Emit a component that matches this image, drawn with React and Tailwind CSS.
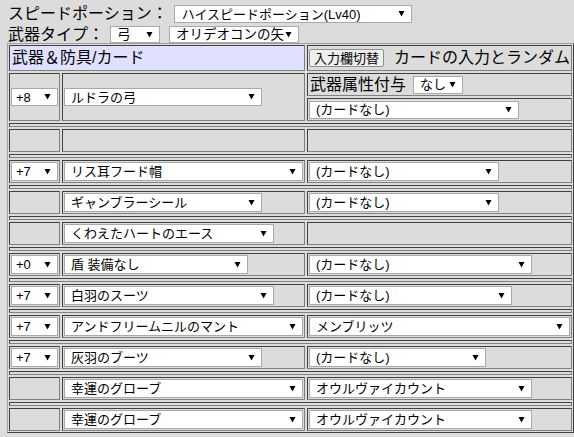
import React from "react";

const cellCls =
  "border border-t-[#404040] border-l-[#404040] border-r-[#808080] border-b-[#808080] p-[1px] flex items-center";

function Arrow() {
  return (
    <svg className="ml-auto mr-[6px] shrink-0" width="7" height="6" viewBox="0 0 7 6">
      <polygon points="0.5,0 6.5,0 3.5,5.5" fill="#000" />
    </svg>
  );
}

function Sel({ text, className = "", pl = "pl-[6px]", size = "text-[13px]" }) {
  return (
    <div
      className={`flex items-center bg-white border border-[#a9a9a9] leading-none text-black whitespace-nowrap ${size} ${pl} ${className}`}
    >
      <span>{text}</span>
      <Arrow />
    </div>
  );
}

function Cell({ children, className = "" }) {
  return <div className={`${cellCls} ${className}`}>{children}</div>;
}

function Sep() {
  return <div className="col-span-3 h-[4px] border border-t-[#404040] border-l-[#404040] border-r-[#808080] border-b-[#808080]" />;
}

const rows = [
  { ref: "+7", item: "リス耳フード帽", iw: "w-full", card: "(カードなし)", cw: "w-[190px]" },
  { ref: null, item: "ギャンブラーシール", iw: "w-[198px]", card: "(カードなし)", cw: "w-[190px]" },
  { ref: null, item: "くわえたハートのエース", iw: "w-[210px]", card: null },
  { ref: "+0", item: "盾 装備なし", iw: "w-[184px]", card: "(カードなし)", cw: "w-[223px]" },
  { ref: "+7", item: "白羽のスーツ", iw: "w-[210px]", card: "(カードなし)", cw: "w-[203px]" },
  { ref: "+7", item: "アンドフリームニルのマント", iw: "w-full", card: "メンブリッツ", cw: "w-full" },
  { ref: "+7", item: "灰羽のブーツ", iw: "w-[198px]", card: "(カードなし)", cw: "w-[177px]" },
  { ref: null, item: "幸運のグローブ", iw: "w-full", card: "オウルヴァイカウント", cw: "w-[223px]" },
  { ref: null, item: "幸運のグローブ", iw: "w-full", card: "オウルヴァイカウント", cw: "w-[223px]" },
];

export default function App() {
  return (
    <div className="w-[574px] h-[437px] overflow-hidden bg-[#dcdcdc] text-black font-['Liberation_Sans','Noto_Sans_CJK_JP',sans-serif]">
      <div className="pl-[8px] pt-[5px]">
        <div className="flex items-center h-[18px]">
          <span className="text-[16px] leading-none whitespace-nowrap">スピードポーション：</span>
          <Sel className="ml-[6px] w-[238px] h-[18px]" pl="pl-[7px]" text="ハイスピードポーション(Lv40)" />
        </div>
        <div className="flex items-center h-[17px] mt-[3px]">
          <span className="text-[16px] leading-none whitespace-nowrap">武器タイプ：</span>
          <Sel className="ml-[6px] w-[50px] h-[17px]" size="text-[13.5px]" text="弓" />
          <Sel className="ml-[9px] w-[130px] h-[17px]" size="text-[13.5px]" text="オリデオコンの矢" />
        </div>
      </div>

      <div className="ml-[7px] w-[567px] border border-t-[#a0a0a0] border-l-[#a0a0a0] border-r-[#404040] border-b-[#404040] p-[1px]">
        <div className="grid grid-cols-[51px_243px_265px] gap-[2px]">
          <Cell className="col-span-2 h-[26px] bg-[#e0e0ff]">
            <span className="text-[16px] leading-none whitespace-nowrap pl-[1px]">武器＆防具/カード</span>
          </Cell>
          <Cell className="h-[26px]">
            <button className="h-[18px] w-[83px] border border-[#8f8f8f] rounded-[2px] bg-[#efefef] text-[13px] leading-none whitespace-nowrap">
              入力欄切替
            </button>
            <span className="ml-[10px] text-[16px] leading-none whitespace-nowrap">カードの入力とランダム</span>
          </Cell>

          <Cell className="row-span-2">
            <Sel className="w-full h-[18px]" pl="pl-[4px]" text="+8" />
          </Cell>
          <Cell className="row-span-2">
            <Sel className="w-[198px] h-[18px]" text="ルドラの弓" />
          </Cell>
          <Cell className="h-[23px]">
            <span className="text-[16px] leading-none whitespace-nowrap pl-[1px]">武器属性付与</span>
            <Sel className="ml-[7px] w-[50px] h-[18px]" text="なし" />
          </Cell>
          <Cell className="h-[23px]">
            <Sel className="w-[210px] h-[18px]" text="(カードなし)" />
          </Cell>

          <Sep />
          <Cell className="h-[23px]" />
          <Cell className="h-[23px]" />
          <Cell className="h-[23px]" />

          {rows.map((r, i) => (
            <React.Fragment key={i}>
              <Sep />
              <Cell className="h-[23px]">
                {r.ref && <Sel className="w-full h-full" pl="pl-[4px]" text={r.ref} />}
              </Cell>
              <Cell className="h-[23px]">
                <Sel className={`${r.iw} h-full`} text={r.item} />
              </Cell>
              <Cell className="h-[23px]">
                {r.card && <Sel className={`${r.cw} h-full`} text={r.card} />}
              </Cell>
            </React.Fragment>
          ))}
        </div>
      </div>
    </div>
  );
}
